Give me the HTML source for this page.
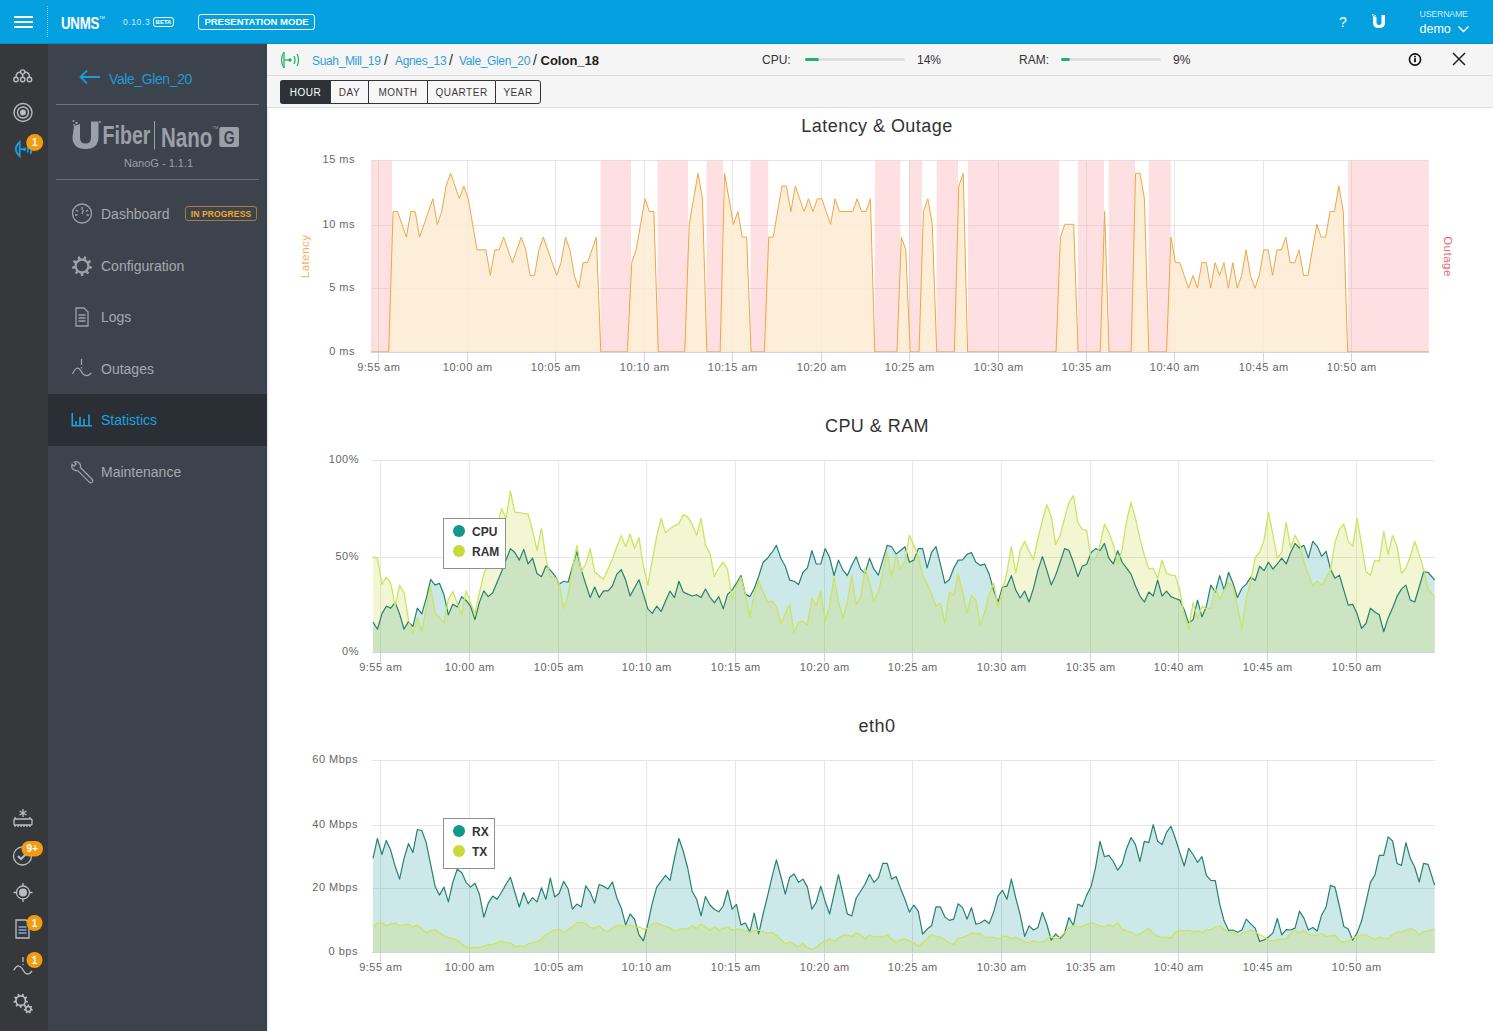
<!DOCTYPE html>
<html>
<head>
<meta charset="utf-8">
<style>
html,body{margin:0;padding:0;}
body{width:1493px;height:1031px;overflow:hidden;position:relative;background:#fff;font-family:"Liberation Sans",sans-serif;}
.abs{position:absolute;}
#top{left:0;top:0;width:1493px;height:44px;background:#04a0e0;box-shadow:inset 0 -1px 0 rgba(0,60,100,0.18);}
#rail{left:0;top:44px;width:48px;height:987px;background:#37383c;}
#side{left:48px;top:44px;width:219px;height:987px;background:#3d434c;box-shadow:1px 0 2px rgba(0,0,0,0.12);}
#hdr1{left:267px;top:44px;width:1226px;height:31px;background:#f5f5f5;border-bottom:1px solid #dcdcdc;}
#hdr2{left:267px;top:76px;width:1226px;height:31px;background:#f5f5f5;border-bottom:1px solid #dcdcdc;}
.charts{position:absolute;left:0;top:0;}
.ax{font-family:"Liberation Sans",sans-serif;font-size:11px;fill:#666;letter-spacing:0.5px;}
.title{font-family:"Liberation Sans",sans-serif;font-size:18px;fill:#333;letter-spacing:0.45px;}
.ttl1{font-family:"Liberation Sans",sans-serif;font-size:11.5px;letter-spacing:0.5px;}
.leg{font-family:"Liberation Sans",sans-serif;font-size:12px;font-weight:bold;fill:#333;}
.t{position:absolute;white-space:nowrap;line-height:1;}
.nav{position:absolute;left:101px;font-size:14px;color:#a4a9b0;line-height:1;}
.navi{position:absolute;left:72px;}
.bc{top:55px;font-size:12px;color:#2f9fd8;letter-spacing:-0.35px;}
.bs{top:53px;font-size:14px;color:#1f1f1f;}
.btn{position:absolute;top:80px;height:24px;box-sizing:border-box;font-size:10px;letter-spacing:0.5px;color:#3a3a3a;line-height:23px;text-align:center;background:#f7f7f7;border-top:1px solid #333;border-bottom:1px solid #333;border-left:1px solid #333;}
</style>
</head>
<body>
<div id="top" class="abs"></div>
<div id="rail" class="abs"></div>
<div id="side" class="abs"></div>
<div id="hdr1" class="abs"></div>
<div id="hdr2" class="abs"></div>

<!-- top bar content -->
<svg class="abs" style="left:0;top:0" width="300" height="44">
  <rect x="14" y="16" width="19" height="2" fill="#fff"/>
  <rect x="14" y="21" width="19" height="2" fill="#fff"/>
  <rect x="14" y="26" width="19" height="2" fill="#fff"/>
  <line x1="47.5" y1="6" x2="47.5" y2="37" stroke="#6fd8fb" stroke-width="1" stroke-dasharray="1,1"/>
</svg>
<div class="t" style="left:60.5px;top:15.5px;font-size:16px;font-weight:bold;color:#fff;transform:scaleX(0.83);transform-origin:0 0;letter-spacing:-0.3px;">UNMS</div>
<div class="t" style="left:99px;top:16px;font-size:4px;color:#fff;">TM</div>
<div class="t" style="left:123px;top:17.5px;font-size:8.5px;color:#cdeefb;letter-spacing:0.6px;">0.10.3</div>
<div class="t" style="left:153px;top:17px;width:19px;height:8px;border:1px solid #fff;border-radius:3px;font-size:6px;font-weight:bold;color:#fff;text-align:center;line-height:8px;">BETA</div>
<div class="t" style="left:198px;top:14px;width:115px;height:14px;border:1px solid #fff;border-radius:3px;font-size:9.5px;font-weight:bold;color:#fff;text-align:center;line-height:14px;">PRESENTATION MODE</div>
<div class="t" style="left:1339px;top:15px;font-size:14px;color:#fff;">?</div>
<svg class="abs" style="left:1370px;top:13px" width="18" height="17" viewBox="0 0 18 17">
  <path d="M3,3 L3,10 Q3,15 9,15 Q15,15 15,10 L15,2 L11.5,2 L11.5,10 Q11.5,12 9,12 Q6.5,12 6.5,10 L6.5,4" fill="#fff"/>
  <rect x="2" y="1" width="1.5" height="1.5" fill="#fff"/><rect x="4.5" y="2" width="1.2" height="1.2" fill="#fff"/>
</svg>
<div class="t" style="left:1419.5px;top:9.5px;font-size:8.8px;color:#c9ecfa;letter-spacing:-0.2px;">USERNAME</div>
<div class="t" style="left:1419.5px;top:23px;font-size:12.5px;color:#fff;">demo</div>
<svg class="abs" style="left:1457px;top:25px" width="14" height="9"><path d="M1.5,1.5 L6.5,6.5 L11.5,1.5" fill="none" stroke="#fff" stroke-width="1.4"/></svg>

<!-- rail icons -->
<svg class="abs" style="left:0;top:44px" width="48" height="987" viewBox="0 44 48 987">
  <g fill="none" stroke="#b9bec5" stroke-width="1.4">
    <circle cx="22.7" cy="72" r="2.1"/><circle cx="16" cy="79.5" r="2.2"/><circle cx="22.7" cy="79.5" r="2.2"/><circle cx="29.5" cy="79.5" r="2.2"/>
    <path d="M16,77.3 Q16,72 20.6,72 M24.8,72 Q29.5,72 29.5,77.3 M22.7,74.1 V77.3"/>
    <circle cx="23" cy="112.5" r="9"/><circle cx="23" cy="112.5" r="5.5"/>
  </g>
  <circle cx="23" cy="112.5" r="3" fill="#b9bec5"/>
  <g fill="none" stroke="#1d9ad7" stroke-width="1.8">
    <path d="M19.7,142 Q12,149 19.7,156.3 Z"/>
    <line x1="19.7" y1="149.2" x2="24.5" y2="149.2"/>
    <path d="M27.5,146.5 Q29,149.5 27.5,152.5"/><path d="M30.5,145 Q32.5,149.5 30.5,154"/>
  </g>
  <circle cx="24.5" cy="149.2" r="1.8" fill="#1d9ad7"/>
  <circle cx="34.7" cy="142.5" r="8.5" fill="#f39c12"/>
  <text x="34.7" y="146.3" text-anchor="middle" font-family="Liberation Sans" font-size="10" font-weight="bold" fill="#fff">1</text>

  <!-- bottom icons -->
  <g fill="none" stroke="#b9bec5" stroke-width="1.3">
    <rect x="14" y="819" width="18" height="6" rx="1"/>
    <path d="M15,825 v2 M18,825 v2 M21,825 v2 M24,825 v2 M27,825 v2 M30,825 v2 M15,817 v2 M30,817 v2"/>
    <path d="M23,809 v8 M19.5,811 l7,4 M26.5,811 l-7,4"/>
    <circle cx="22.5" cy="856" r="9"/>
    <path d="M18,856 l3,3 l6,-6" stroke-width="2" stroke="#9fc4e2"/>
    <circle cx="23" cy="892.5" r="6.5"/>
    <path d="M23,883 v3 M23,899 v3 M13.5,892.5 h3 M29.5,892.5 h3"/>
    <path d="M16,920 h10 l3,3 v15 h-13 z"/>
    <path d="M18.5,927 h8 M18.5,930 h8 M18.5,933 h8" stroke="#7fa9cf"/>
    <path d="M13.8,970.3 Q18,962 22.5,969 Q27,978 32,971"/>
    <path d="M23,957 v5 M23,964 v1"/>
  </g>
  <circle cx="23" cy="892.5" r="4" fill="#b9bec5"/>
  <path d="M26.30,1000.70 L27.89,1001.10 L27.59,1002.78 L25.96,1002.62 L24.99,1004.30 L25.95,1005.63 L24.64,1006.72 L23.50,1005.55 L21.67,1006.21 L21.55,1007.85 L19.85,1007.85 L19.73,1006.21 L17.90,1005.55 L16.76,1006.72 L15.45,1005.63 L16.41,1004.30 L15.44,1002.62 L13.81,1002.78 L13.51,1001.10 L15.10,1000.70 L15.44,998.78 L14.08,997.86 L14.93,996.39 L16.41,997.10 L17.90,995.85 L17.45,994.27 L19.06,993.69 L19.73,995.19 L21.67,995.19 L22.34,993.69 L23.95,994.27 L23.50,995.85 L24.99,997.10 L26.47,996.39 L27.32,997.86 L25.96,998.78 Z M24.60,1000.70 A3.9,3.9 0 1 0 16.80,1000.70 A3.9,3.9 0 1 0 24.60,1000.70 Z" fill="#b9bec5" fill-rule="evenodd"/><path d="M31.80,1009.10 L32.89,1009.43 L32.58,1010.79 L31.45,1010.62 L30.48,1011.84 L30.90,1012.89 L29.64,1013.50 L29.08,1012.51 L27.52,1012.51 L26.96,1013.50 L25.70,1012.89 L26.12,1011.84 L25.15,1010.62 L24.02,1010.79 L23.71,1009.43 L24.80,1009.10 L25.15,1007.58 L24.31,1006.81 L25.18,1005.72 L26.12,1006.36 L27.52,1005.69 L27.60,1004.55 L29.00,1004.55 L29.08,1005.69 L30.48,1006.36 L31.42,1005.72 L32.29,1006.81 L31.45,1007.58 Z M30.10,1009.10 A1.8,1.8 0 1 0 26.50,1009.10 A1.8,1.8 0 1 0 30.10,1009.10 Z" fill="#b9bec5" fill-rule="evenodd"/>
  <rect x="21.5" y="841" width="21.5" height="15.5" rx="7.75" fill="#f39c12"/>
  <text x="32.3" y="852" text-anchor="middle" font-family="Liberation Sans" font-size="10" font-weight="bold" fill="#fff">9+</text>
  <circle cx="34.5" cy="923" r="8" fill="#f39c12"/>
  <text x="34.5" y="927" text-anchor="middle" font-family="Liberation Sans" font-size="10" font-weight="bold" fill="#fff">1</text>
  <circle cx="34.5" cy="960" r="8" fill="#f39c12"/>
  <text x="34.5" y="964" text-anchor="middle" font-family="Liberation Sans" font-size="10" font-weight="bold" fill="#fff">1</text>
</svg>

<!-- sidebar -->
<svg class="abs" style="left:78px;top:68px" width="24" height="18"><path d="M22,9 H3 M9,2.5 L2.5,9 L9,15.5" fill="none" stroke="#1e9ad6" stroke-width="1.8"/></svg>
<div class="t" style="left:109px;top:71.5px;font-size:14px;letter-spacing:-0.4px;color:#1e9ad6;">Vale_Glen_20</div>
<div class="abs" style="left:56px;top:104px;width:203px;height:1px;background:#6d727a;"></div>
<div class="abs" style="left:56px;top:179px;width:203px;height:1px;background:#6d727a;"></div>
<!-- logo -->
<svg class="abs" style="left:0;top:0" width="267" height="170" viewBox="0 0 267 170">
  <g fill="#9aa0a8">
    <path d="M74,126 L80,124 L80,138 Q80,143.5 85.5,143.5 Q91,143.5 91,138 L91,121.5 L98.5,121.5 L98.5,137 Q98.5,149 85.5,149 Q72.5,149 72.5,137 Z"/>
    <circle cx="73.5" cy="121" r="1"/><circle cx="76.5" cy="123" r="1.2"/><circle cx="74" cy="125" r="0.9"/>
    <circle cx="100" cy="122" r="1"/>
    <text x="0" y="0" transform="translate(102.5,144) scale(0.74,1)" font-family="Liberation Sans" font-size="26.5" font-weight="bold">Fiber</text>
    <rect x="154" y="121" width="1" height="28.5"/>
    <text x="0" y="0" transform="translate(161,147) scale(0.72,1)" font-family="Liberation Sans" font-size="28.5" font-weight="bold">Nano</text>
    <text x="212.5" y="129" font-family="Liberation Sans" font-size="4">TM</text>
    <rect x="219.3" y="127" width="19.7" height="20" rx="2.2"/>
  </g>
  <text x="0" y="0" transform="translate(229.2,144) scale(0.78,1)" text-anchor="middle" font-family="Liberation Sans" font-size="18" font-weight="bold" fill="#3d434c">G</text>
</svg>
<div class="t" style="left:124px;top:158px;font-size:11px;color:#9aa0a8;">NanoG - 1.1.1</div>

<div class="abs" style="left:48px;top:394px;width:219px;height:52px;background:#2a2f36;"></div>
<div class="nav" style="top:207px;">Dashboard</div>
<div class="t" style="left:185px;top:206px;width:70px;height:13px;border:1px solid #a57c45;border-radius:3px;font-size:8.5px;font-weight:bold;color:#f5a623;text-align:center;line-height:14px;letter-spacing:0.15px;">IN PROGRESS</div>
<div class="nav" style="top:259px;">Configuration</div>
<div class="nav" style="top:310px;">Logs</div>
<div class="nav" style="top:362px;">Outages</div>
<div class="nav" style="top:413px;color:#21a0dd;">Statistics</div>
<div class="nav" style="top:465px;">Maintenance</div>
<svg class="abs" style="left:68px;top:195px" width="28" height="290" viewBox="68 195 28 290">
  <g fill="none" stroke="#9ca1a8" stroke-width="1.3">
    <circle cx="82" cy="213.5" r="9.5"/>
    <path d="M82,207 v3 M76,210 l2,1.5 M88,210 l-2,1.5 M75,215 h2.5 M89,215 h-2.5 M82,214 l1.5,-4"/>
    <path d="M76,308 h8 l4,4 v14 h-12 z M78.5,315 h7 M78.5,318 h7 M78.5,321 h7"/>
    <path d="M72.5,374 Q77,364 81,371 Q85,379 91.5,373"/>
    <path d="M81.5,359 v6 M81.5,367 v1.5"/>
    <path transform="translate(76.2,466.2) rotate(45)" d="M3.9,2 A4.5,4.5 0 0 1 -4.24,1.5 L-1.5,1.5 L-1.5,-1.5 L-4.24,-1.5 A4.5,4.5 0 0 1 3.9,-2 L20.5,-2 A2,2 0 0 1 20.5,2 Z"/>
  </g>
  <path d="M89.60,266.00 L91.98,266.56 L91.57,268.89 L89.14,268.60 L87.82,270.89 L89.29,272.85 L87.48,274.37 L85.80,272.58 L83.32,273.48 L83.18,275.93 L80.82,275.93 L80.68,273.48 L78.20,272.58 L76.52,274.37 L74.71,272.85 L76.18,270.89 L74.86,268.60 L72.43,268.89 L72.02,266.56 L74.40,266.00 L74.86,263.40 L72.81,262.06 L73.99,260.01 L76.18,261.11 L78.20,259.42 L77.49,257.07 L79.72,256.26 L80.68,258.52 L83.32,258.52 L84.28,256.26 L86.51,257.07 L85.80,259.42 L87.82,261.11 L90.01,260.01 L91.19,262.06 L89.14,263.40 Z M87.30,266.00 A5.3,5.3 0 1 0 76.70,266.00 A5.3,5.3 0 1 0 87.30,266.00 Z" fill="#9ca1a8" fill-rule="evenodd"/>
  <g fill="none" stroke="#21a0dd" stroke-width="1.6">
    <path d="M71.5,425.8 h20.5 M72.3,413 v12.8 M76,421 v4.8 M80,416.7 v9.1 M84,419 v6.8 M89,414.6 v11.2"/>
  </g>
</svg>

<!-- header content -->
<svg class="abs" style="left:278px;top:50px" width="24" height="20" viewBox="0 0 24 20">
  <g fill="none" stroke="#2eb36b" stroke-width="1.3">
    <path d="M6,2 Q1,10 6,18"/><line x1="6" y1="2" x2="6" y2="18"/>
    <line x1="6" y1="10" x2="12" y2="10"/>
    <path d="M16,6 Q18,10 16,14"/><path d="M19,4 Q22,10 19,16"/>
  </g>
  <circle cx="12" cy="10" r="1.8" fill="#2eb36b"/>
</svg>
<div class="t bc" style="left:312px;">Suah_Mill_19</div>
<div class="t bs" style="left:384px;">/</div>
<div class="t bc" style="left:395px;">Agnes_13</div>
<div class="t bs" style="left:449px;">/</div>
<div class="t bc" style="left:459px;">Vale_Glen_20</div>
<div class="t bs" style="left:533px;">/</div>
<div class="t" style="left:540.5px;top:54px;font-size:13px;font-weight:bold;color:#1f1f1f;">Colon_18</div>
<div class="t" style="left:762px;top:54px;font-size:12px;color:#333;">CPU:</div>
<div class="abs" style="left:805px;top:58px;width:100px;height:3px;background:#e0e0e0;border-radius:2px;"></div>
<div class="abs" style="left:805px;top:58px;width:14px;height:3px;background:#1fb36a;border-radius:2px;"></div>
<div class="t" style="left:917px;top:54px;font-size:12px;color:#333;">14%</div>
<div class="t" style="left:1019px;top:54px;font-size:12px;color:#333;">RAM:</div>
<div class="abs" style="left:1061px;top:58px;width:100px;height:3px;background:#e0e0e0;border-radius:2px;"></div>
<div class="abs" style="left:1061px;top:58px;width:9px;height:3px;background:#1fb36a;border-radius:2px;"></div>
<div class="t" style="left:1173px;top:54px;font-size:12px;color:#333;">9%</div>
<svg class="abs" style="left:1406px;top:51px" width="18" height="18" viewBox="0 0 18 18">
  <circle cx="9" cy="8.5" r="5.6" fill="none" stroke="#111" stroke-width="1.6"/>
  <rect x="8.1" y="7.2" width="1.8" height="4" fill="#111"/><rect x="8.1" y="4.8" width="1.8" height="1.6" fill="#111"/>
</svg>
<svg class="abs" style="left:1450px;top:51px" width="18" height="16"><path d="M3,2 L15,14 M15,2 L3,14" stroke="#222" stroke-width="1.5"/></svg>

<div class="btn" style="left:280px;width:50px;background:#2e3237;color:#fff;border-radius:3px 0 0 3px;border-color:#2e3237;">HOUR</div>
<div class="btn" style="left:330px;width:38px;">DAY</div>
<div class="btn" style="left:368px;width:59px;">MONTH</div>
<div class="btn" style="left:427px;width:68px;">QUARTER</div>
<div class="btn" style="left:495px;width:46px;border-right:1px solid #333;border-radius:0 3px 3px 0;">YEAR</div>

<svg class="charts" width="1493" height="1031" viewBox="0 0 1493 1031"><line x1="371" y1="160.5" x2="1429" y2="160.5" stroke="#e6e6e6"/><line x1="371" y1="225.5" x2="1429" y2="225.5" stroke="#e6e6e6"/><line x1="371" y1="288.5" x2="1429" y2="288.5" stroke="#e6e6e6"/><line x1="371" y1="351.5" x2="1429" y2="351.5" stroke="#e6e6e6"/><line x1="378.5" y1="160" x2="378.5" y2="352" stroke="#e6e6e6"/><line x1="467.5" y1="160" x2="467.5" y2="352" stroke="#e6e6e6"/><line x1="555.5" y1="160" x2="555.5" y2="352" stroke="#e6e6e6"/><line x1="644.5" y1="160" x2="644.5" y2="352" stroke="#e6e6e6"/><line x1="732.5" y1="160" x2="732.5" y2="352" stroke="#e6e6e6"/><line x1="821.5" y1="160" x2="821.5" y2="352" stroke="#e6e6e6"/><line x1="909.5" y1="160" x2="909.5" y2="352" stroke="#e6e6e6"/><line x1="998.5" y1="160" x2="998.5" y2="352" stroke="#e6e6e6"/><line x1="1086.5" y1="160" x2="1086.5" y2="352" stroke="#e6e6e6"/><line x1="1174.5" y1="160" x2="1174.5" y2="352" stroke="#e6e6e6"/><line x1="1263.5" y1="160" x2="1263.5" y2="352" stroke="#e6e6e6"/><line x1="1351.5" y1="160" x2="1351.5" y2="352" stroke="#e6e6e6"/><rect x="371.0" y="160.5" width="21.0" height="191.5" fill="#fca9b1" fill-opacity="0.36"/><rect x="600.5" y="160.5" width="30.5" height="191.5" fill="#fca9b1" fill-opacity="0.36"/><rect x="657.5" y="160.5" width="30.5" height="191.5" fill="#fca9b1" fill-opacity="0.36"/><rect x="706.6" y="160.5" width="16.4" height="191.5" fill="#fca9b1" fill-opacity="0.36"/><rect x="750.5" y="160.5" width="17.7" height="191.5" fill="#fca9b1" fill-opacity="0.36"/><rect x="874.8" y="160.5" width="25.4" height="191.5" fill="#fca9b1" fill-opacity="0.36"/><rect x="909.1" y="160.5" width="12.8" height="191.5" fill="#fca9b1" fill-opacity="0.36"/><rect x="936.6" y="160.5" width="21.4" height="191.5" fill="#fca9b1" fill-opacity="0.36"/><rect x="968.0" y="160.5" width="91.2" height="191.5" fill="#fca9b1" fill-opacity="0.36"/><rect x="1078.0" y="160.5" width="26.0" height="191.5" fill="#fca9b1" fill-opacity="0.36"/><rect x="1108.7" y="160.5" width="26.3" height="191.5" fill="#fca9b1" fill-opacity="0.36"/><rect x="1148.6" y="160.5" width="22.1" height="191.5" fill="#fca9b1" fill-opacity="0.36"/><rect x="1348.0" y="160.5" width="80.9" height="191.5" fill="#fca9b1" fill-opacity="0.36"/><path d="M371.00,352.00 L375.42,352.00 L379.84,352.00 L384.26,352.00 L388.68,352.00 L393.10,211.57 L397.52,211.57 L401.94,224.33 L406.36,237.10 L410.78,211.57 L415.19,211.57 L419.61,237.10 L424.03,224.33 L428.45,211.57 L432.87,198.80 L437.29,224.33 L441.71,211.57 L446.13,186.03 L450.55,173.27 L454.97,186.03 L459.39,198.80 L463.81,186.03 L468.23,198.80 L472.65,224.33 L477.07,249.87 L481.49,249.87 L485.91,249.87 L490.33,275.40 L494.75,249.87 L499.17,249.87 L503.59,237.10 L508.00,249.87 L512.42,262.63 L516.84,249.87 L521.26,237.10 L525.68,249.87 L530.10,275.40 L534.52,275.40 L538.94,249.87 L543.36,237.10 L547.78,249.87 L552.20,262.63 L556.62,275.40 L561.04,262.63 L565.46,237.10 L569.88,249.87 L574.30,275.40 L578.72,288.17 L583.14,262.63 L587.56,262.63 L591.98,249.87 L596.39,237.10 L600.81,352.00 L605.23,352.00 L609.65,352.00 L614.07,352.00 L618.49,352.00 L622.91,352.00 L627.33,352.00 L631.75,262.63 L636.17,249.87 L640.59,224.33 L645.01,198.80 L649.43,211.57 L653.85,211.57 L658.27,352.00 L662.69,352.00 L667.11,352.00 L671.53,352.00 L675.95,352.00 L680.37,352.00 L684.78,352.00 L689.20,224.33 L693.62,198.80 L698.04,173.27 L702.46,198.80 L706.88,352.00 L711.30,352.00 L715.72,352.00 L720.14,352.00 L724.56,173.27 L728.98,198.80 L733.40,224.33 L737.82,211.57 L742.24,237.10 L746.66,237.10 L751.08,352.00 L755.50,352.00 L759.92,352.00 L764.34,352.00 L768.75,237.10 L773.17,237.10 L777.59,211.57 L782.01,186.03 L786.43,186.03 L790.85,211.57 L795.27,186.03 L799.69,198.80 L804.11,211.57 L808.53,198.80 L812.95,211.57 L817.37,198.80 L821.79,198.80 L826.21,211.57 L830.63,224.33 L835.05,198.80 L839.47,211.57 L843.89,211.57 L848.31,211.57 L852.73,211.57 L857.14,198.80 L861.56,211.57 L865.98,211.57 L870.40,198.80 L874.82,352.00 L879.24,352.00 L883.66,352.00 L888.08,352.00 L892.50,352.00 L896.92,352.00 L901.34,237.10 L905.76,249.87 L910.18,352.00 L914.60,352.00 L919.02,352.00 L923.44,211.57 L927.86,198.80 L932.28,224.33 L936.70,352.00 L941.12,352.00 L945.54,352.00 L949.95,352.00 L954.37,352.00 L958.79,186.03 L963.21,173.27 L967.63,352.00 L972.05,352.00 L976.47,352.00 L980.89,352.00 L985.31,352.00 L989.73,352.00 L994.15,352.00 L998.57,352.00 L1002.99,352.00 L1007.41,352.00 L1011.83,352.00 L1016.25,352.00 L1020.67,352.00 L1025.09,352.00 L1029.51,352.00 L1033.93,352.00 L1038.34,352.00 L1042.76,352.00 L1047.18,352.00 L1051.60,352.00 L1056.02,352.00 L1060.44,237.10 L1064.86,224.33 L1069.28,224.33 L1073.70,224.33 L1078.12,352.00 L1082.54,352.00 L1086.96,352.00 L1091.38,352.00 L1095.80,352.00 L1100.22,352.00 L1104.64,211.57 L1109.06,352.00 L1113.48,352.00 L1117.90,352.00 L1122.32,352.00 L1126.73,352.00 L1131.15,352.00 L1135.57,173.27 L1139.99,173.27 L1144.41,198.80 L1148.83,352.00 L1153.25,352.00 L1157.67,352.00 L1162.09,352.00 L1166.51,352.00 L1170.93,237.10 L1175.35,262.63 L1179.77,262.63 L1184.19,275.40 L1188.61,288.17 L1193.03,275.40 L1197.45,288.17 L1201.87,262.63 L1206.29,262.63 L1210.70,288.17 L1215.12,262.63 L1219.54,275.40 L1223.96,262.63 L1228.38,288.17 L1232.80,262.63 L1237.22,288.17 L1241.64,275.40 L1246.06,249.87 L1250.48,275.40 L1254.90,288.17 L1259.32,275.40 L1263.74,249.87 L1268.16,249.87 L1272.58,275.40 L1277.00,249.87 L1281.42,249.87 L1285.84,237.10 L1290.26,262.63 L1294.68,262.63 L1299.10,249.87 L1303.51,275.40 L1307.93,275.40 L1312.35,249.87 L1316.77,224.33 L1321.19,237.10 L1325.61,237.10 L1330.03,211.57 L1334.45,211.57 L1338.87,186.03 L1343.29,211.57 L1347.71,352.00 L1352.13,352.00 L1356.55,352.00 L1360.97,352.00 L1365.39,352.00 L1369.81,352.00 L1374.23,352.00 L1378.65,352.00 L1383.07,352.00 L1387.49,352.00 L1391.90,352.00 L1396.32,352.00 L1400.74,352.00 L1405.16,352.00 L1409.58,352.00 L1414.00,352.00 L1418.42,352.00 L1422.84,352.00 L1428.90,352.00 L1428.90,352.00 L371.00,352.00 Z" fill="#fdebd2" fill-opacity="0.85"/><path d="M371.00,352.00 L375.42,352.00 L379.84,352.00 L384.26,352.00 L388.68,352.00 L393.10,211.57 L397.52,211.57 L401.94,224.33 L406.36,237.10 L410.78,211.57 L415.19,211.57 L419.61,237.10 L424.03,224.33 L428.45,211.57 L432.87,198.80 L437.29,224.33 L441.71,211.57 L446.13,186.03 L450.55,173.27 L454.97,186.03 L459.39,198.80 L463.81,186.03 L468.23,198.80 L472.65,224.33 L477.07,249.87 L481.49,249.87 L485.91,249.87 L490.33,275.40 L494.75,249.87 L499.17,249.87 L503.59,237.10 L508.00,249.87 L512.42,262.63 L516.84,249.87 L521.26,237.10 L525.68,249.87 L530.10,275.40 L534.52,275.40 L538.94,249.87 L543.36,237.10 L547.78,249.87 L552.20,262.63 L556.62,275.40 L561.04,262.63 L565.46,237.10 L569.88,249.87 L574.30,275.40 L578.72,288.17 L583.14,262.63 L587.56,262.63 L591.98,249.87 L596.39,237.10 L600.81,352.00 L605.23,352.00 L609.65,352.00 L614.07,352.00 L618.49,352.00 L622.91,352.00 L627.33,352.00 L631.75,262.63 L636.17,249.87 L640.59,224.33 L645.01,198.80 L649.43,211.57 L653.85,211.57 L658.27,352.00 L662.69,352.00 L667.11,352.00 L671.53,352.00 L675.95,352.00 L680.37,352.00 L684.78,352.00 L689.20,224.33 L693.62,198.80 L698.04,173.27 L702.46,198.80 L706.88,352.00 L711.30,352.00 L715.72,352.00 L720.14,352.00 L724.56,173.27 L728.98,198.80 L733.40,224.33 L737.82,211.57 L742.24,237.10 L746.66,237.10 L751.08,352.00 L755.50,352.00 L759.92,352.00 L764.34,352.00 L768.75,237.10 L773.17,237.10 L777.59,211.57 L782.01,186.03 L786.43,186.03 L790.85,211.57 L795.27,186.03 L799.69,198.80 L804.11,211.57 L808.53,198.80 L812.95,211.57 L817.37,198.80 L821.79,198.80 L826.21,211.57 L830.63,224.33 L835.05,198.80 L839.47,211.57 L843.89,211.57 L848.31,211.57 L852.73,211.57 L857.14,198.80 L861.56,211.57 L865.98,211.57 L870.40,198.80 L874.82,352.00 L879.24,352.00 L883.66,352.00 L888.08,352.00 L892.50,352.00 L896.92,352.00 L901.34,237.10 L905.76,249.87 L910.18,352.00 L914.60,352.00 L919.02,352.00 L923.44,211.57 L927.86,198.80 L932.28,224.33 L936.70,352.00 L941.12,352.00 L945.54,352.00 L949.95,352.00 L954.37,352.00 L958.79,186.03 L963.21,173.27 L967.63,352.00 L972.05,352.00 L976.47,352.00 L980.89,352.00 L985.31,352.00 L989.73,352.00 L994.15,352.00 L998.57,352.00 L1002.99,352.00 L1007.41,352.00 L1011.83,352.00 L1016.25,352.00 L1020.67,352.00 L1025.09,352.00 L1029.51,352.00 L1033.93,352.00 L1038.34,352.00 L1042.76,352.00 L1047.18,352.00 L1051.60,352.00 L1056.02,352.00 L1060.44,237.10 L1064.86,224.33 L1069.28,224.33 L1073.70,224.33 L1078.12,352.00 L1082.54,352.00 L1086.96,352.00 L1091.38,352.00 L1095.80,352.00 L1100.22,352.00 L1104.64,211.57 L1109.06,352.00 L1113.48,352.00 L1117.90,352.00 L1122.32,352.00 L1126.73,352.00 L1131.15,352.00 L1135.57,173.27 L1139.99,173.27 L1144.41,198.80 L1148.83,352.00 L1153.25,352.00 L1157.67,352.00 L1162.09,352.00 L1166.51,352.00 L1170.93,237.10 L1175.35,262.63 L1179.77,262.63 L1184.19,275.40 L1188.61,288.17 L1193.03,275.40 L1197.45,288.17 L1201.87,262.63 L1206.29,262.63 L1210.70,288.17 L1215.12,262.63 L1219.54,275.40 L1223.96,262.63 L1228.38,288.17 L1232.80,262.63 L1237.22,288.17 L1241.64,275.40 L1246.06,249.87 L1250.48,275.40 L1254.90,288.17 L1259.32,275.40 L1263.74,249.87 L1268.16,249.87 L1272.58,275.40 L1277.00,249.87 L1281.42,249.87 L1285.84,237.10 L1290.26,262.63 L1294.68,262.63 L1299.10,249.87 L1303.51,275.40 L1307.93,275.40 L1312.35,249.87 L1316.77,224.33 L1321.19,237.10 L1325.61,237.10 L1330.03,211.57 L1334.45,211.57 L1338.87,186.03 L1343.29,211.57 L1347.71,352.00 L1352.13,352.00 L1356.55,352.00 L1360.97,352.00 L1365.39,352.00 L1369.81,352.00 L1374.23,352.00 L1378.65,352.00 L1383.07,352.00 L1387.49,352.00 L1391.90,352.00 L1396.32,352.00 L1400.74,352.00 L1405.16,352.00 L1409.58,352.00 L1414.00,352.00 L1418.42,352.00 L1422.84,352.00 L1428.90,352.00" fill="none" stroke="#eda746" stroke-width="1" stroke-linejoin="round"/><line x1="371" y1="352.5" x2="1429" y2="352.5" stroke="#ccd6eb"/><line x1="378.5" y1="352" x2="378.5" y2="362" stroke="#ccd6eb"/><text x="378.75" y="371" text-anchor="middle" class="ax">9:55 am</text><line x1="467.5" y1="352" x2="467.5" y2="362" stroke="#ccd6eb"/><text x="467.75" y="371" text-anchor="middle" class="ax">10:00 am</text><line x1="555.5" y1="352" x2="555.5" y2="362" stroke="#ccd6eb"/><text x="555.75" y="371" text-anchor="middle" class="ax">10:05 am</text><line x1="644.5" y1="352" x2="644.5" y2="362" stroke="#ccd6eb"/><text x="644.75" y="371" text-anchor="middle" class="ax">10:10 am</text><line x1="732.5" y1="352" x2="732.5" y2="362" stroke="#ccd6eb"/><text x="732.75" y="371" text-anchor="middle" class="ax">10:15 am</text><line x1="821.5" y1="352" x2="821.5" y2="362" stroke="#ccd6eb"/><text x="821.75" y="371" text-anchor="middle" class="ax">10:20 am</text><line x1="909.5" y1="352" x2="909.5" y2="362" stroke="#ccd6eb"/><text x="909.75" y="371" text-anchor="middle" class="ax">10:25 am</text><line x1="998.5" y1="352" x2="998.5" y2="362" stroke="#ccd6eb"/><text x="998.75" y="371" text-anchor="middle" class="ax">10:30 am</text><line x1="1086.5" y1="352" x2="1086.5" y2="362" stroke="#ccd6eb"/><text x="1086.75" y="371" text-anchor="middle" class="ax">10:35 am</text><line x1="1174.5" y1="352" x2="1174.5" y2="362" stroke="#ccd6eb"/><text x="1174.75" y="371" text-anchor="middle" class="ax">10:40 am</text><line x1="1263.5" y1="352" x2="1263.5" y2="362" stroke="#ccd6eb"/><text x="1263.75" y="371" text-anchor="middle" class="ax">10:45 am</text><line x1="1351.5" y1="352" x2="1351.5" y2="362" stroke="#ccd6eb"/><text x="1351.75" y="371" text-anchor="middle" class="ax">10:50 am</text><text x="355" y="163" text-anchor="end" class="ax">15 ms</text><text x="355" y="228" text-anchor="end" class="ax">10 ms</text><text x="355" y="291" text-anchor="end" class="ax">5 ms</text><text x="355" y="355" text-anchor="end" class="ax">0 ms</text><text x="0" y="0" transform="translate(308.8,256.3) rotate(-90)" text-anchor="middle" class="ttl1" fill="#f2b15e">Latency</text><text x="0" y="0" transform="translate(1444,256.5) rotate(90)" text-anchor="middle" class="ttl1" fill="#e8677d">Outage</text><text x="877" y="132" text-anchor="middle" class="title">Latency &amp; Outage</text><line x1="372" y1="460.5" x2="1435" y2="460.5" stroke="#e6e6e6"/><line x1="372" y1="557.5" x2="1435" y2="557.5" stroke="#e6e6e6"/><line x1="372" y1="652.5" x2="1435" y2="652.5" stroke="#e6e6e6"/><line x1="380.5" y1="460" x2="380.5" y2="652" stroke="#e6e6e6"/><line x1="469.5" y1="460" x2="469.5" y2="652" stroke="#e6e6e6"/><line x1="558.5" y1="460" x2="558.5" y2="652" stroke="#e6e6e6"/><line x1="646.5" y1="460" x2="646.5" y2="652" stroke="#e6e6e6"/><line x1="735.5" y1="460" x2="735.5" y2="652" stroke="#e6e6e6"/><line x1="824.5" y1="460" x2="824.5" y2="652" stroke="#e6e6e6"/><line x1="912.5" y1="460" x2="912.5" y2="652" stroke="#e6e6e6"/><line x1="1001.5" y1="460" x2="1001.5" y2="652" stroke="#e6e6e6"/><line x1="1090.5" y1="460" x2="1090.5" y2="652" stroke="#e6e6e6"/><line x1="1178.5" y1="460" x2="1178.5" y2="652" stroke="#e6e6e6"/><line x1="1267.5" y1="460" x2="1267.5" y2="652" stroke="#e6e6e6"/><line x1="1356.5" y1="460" x2="1356.5" y2="652" stroke="#e6e6e6"/><path d="M373.00,621.96 L377.43,629.26 L381.87,613.90 L386.30,606.22 L390.73,608.14 L395.17,602.38 L399.60,613.90 L404.03,629.26 L408.46,621.58 L412.90,626.38 L417.33,608.14 L421.76,613.90 L426.20,598.54 L430.63,579.34 L435.06,585.10 L439.50,583.18 L443.93,594.70 L448.36,614.86 L452.79,604.30 L457.23,606.99 L461.66,596.62 L466.09,600.46 L470.53,606.22 L474.96,619.66 L479.39,602.38 L483.82,590.86 L488.26,596.62 L492.69,592.78 L497.12,582.22 L501.56,571.66 L505.99,560.14 L510.42,548.62 L514.86,552.46 L519.29,560.14 L523.72,549.39 L528.15,563.98 L532.59,558.22 L537.02,573.58 L541.45,576.65 L545.89,565.90 L550.32,570.12 L554.75,575.50 L559.19,584.14 L563.62,581.26 L568.05,582.22 L572.49,566.28 L576.92,551.31 L581.35,570.12 L585.78,584.14 L590.22,597.58 L594.65,587.02 L599.08,597.58 L603.52,590.86 L607.95,590.86 L612.38,586.06 L616.82,574.16 L621.25,569.74 L625.68,580.11 L630.11,596.04 L634.55,587.79 L638.98,579.72 L643.41,594.12 L647.85,608.91 L652.28,613.32 L656.71,606.22 L661.14,611.40 L665.58,601.04 L670.01,591.05 L674.44,597.58 L678.88,581.26 L683.31,592.01 L687.74,594.12 L692.18,596.04 L696.61,594.70 L701.04,597.58 L705.47,588.94 L709.91,597.00 L714.34,602.96 L718.77,596.62 L723.21,608.91 L727.64,594.12 L732.07,590.09 L736.51,583.18 L740.94,575.50 L745.37,594.12 L749.81,596.62 L754.24,588.56 L758.67,576.27 L763.10,562.25 L767.54,558.22 L771.97,552.46 L776.40,545.36 L780.84,558.22 L785.27,566.28 L789.70,580.11 L794.13,581.26 L798.57,584.52 L803.00,572.24 L807.43,567.82 L811.87,550.73 L816.30,563.98 L820.73,563.98 L825.17,548.62 L829.60,557.26 L834.03,575.50 L838.46,560.14 L842.90,570.12 L847.33,575.50 L851.76,565.32 L856.20,556.68 L860.63,569.16 L865.06,573.20 L869.50,558.22 L873.93,569.16 L878.36,575.12 L882.79,560.14 L887.23,545.36 L891.66,546.70 L896.09,554.00 L900.53,550.54 L904.96,546.70 L909.39,562.25 L913.83,560.14 L918.26,548.62 L922.69,548.62 L927.12,567.82 L931.56,552.46 L935.99,546.70 L940.42,564.17 L944.86,583.18 L949.29,579.72 L953.72,568.20 L958.16,560.14 L962.59,559.95 L967.02,554.38 L971.45,552.46 L975.89,562.25 L980.32,565.32 L984.75,564.17 L989.19,574.16 L993.62,590.09 L998.05,602.00 L1002.49,587.02 L1006.92,586.06 L1011.35,575.69 L1015.78,590.09 L1020.22,597.96 L1024.65,591.05 L1029.08,602.00 L1033.52,588.17 L1037.95,570.12 L1042.38,556.68 L1046.82,570.12 L1051.25,585.10 L1055.68,575.12 L1060.12,562.25 L1064.55,548.62 L1068.98,550.54 L1073.41,562.25 L1077.85,576.65 L1082.28,566.28 L1086.71,564.17 L1091.15,552.46 L1095.58,548.62 L1100.01,550.54 L1104.44,543.44 L1108.88,558.22 L1113.31,563.98 L1117.74,550.73 L1122.18,562.25 L1126.61,568.20 L1131.04,574.16 L1135.48,586.06 L1139.91,596.04 L1144.34,602.00 L1148.78,592.01 L1153.21,596.04 L1157.64,580.11 L1162.07,596.04 L1166.51,591.05 L1170.94,596.62 L1175.37,598.54 L1179.81,600.08 L1184.24,610.06 L1188.67,622.92 L1193.11,619.85 L1197.54,600.08 L1201.97,616.97 L1206.40,606.22 L1210.84,585.10 L1215.27,592.01 L1219.70,575.69 L1224.14,590.09 L1228.57,572.24 L1233.00,583.18 L1237.43,597.58 L1241.87,588.17 L1246.30,584.14 L1250.73,577.23 L1255.17,580.49 L1259.60,566.28 L1264.03,570.70 L1268.47,562.25 L1272.90,569.16 L1277.33,563.98 L1281.76,558.22 L1286.20,563.98 L1290.63,552.46 L1295.06,543.44 L1299.50,548.04 L1303.93,545.36 L1308.36,557.84 L1312.80,541.32 L1317.23,546.32 L1321.66,556.30 L1326.09,551.31 L1330.53,569.16 L1334.96,578.19 L1339.39,575.12 L1343.83,590.09 L1348.26,605.07 L1352.69,604.30 L1357.13,613.90 L1361.56,628.30 L1365.99,623.50 L1370.42,608.33 L1374.86,611.98 L1379.29,614.86 L1383.72,631.76 L1388.16,617.93 L1392.59,607.95 L1397.02,596.43 L1401.46,589.13 L1405.89,585.10 L1410.32,600.08 L1414.75,602.00 L1419.19,587.02 L1423.62,571.85 L1428.05,572.24 L1434.70,580.11 L1434.70,652.30 L373.00,652.30 Z" fill="#1c9898" fill-opacity="0.22"/><path d="M373.00,556.88 L377.43,558.22 L381.87,584.14 L386.30,577.42 L390.73,583.18 L395.17,606.22 L399.60,585.10 L404.03,592.78 L408.46,619.66 L412.90,633.10 L417.33,617.74 L421.76,631.76 L426.20,608.14 L430.63,586.06 L435.06,612.94 L439.50,617.74 L443.93,622.92 L448.36,599.12 L452.79,591.63 L457.23,602.96 L461.66,614.86 L466.09,590.86 L470.53,602.38 L474.96,613.90 L479.39,592.78 L483.82,574.16 L488.26,562.06 L492.69,540.94 L497.12,527.50 L501.56,508.30 L505.99,518.48 L510.42,491.21 L514.86,512.14 L519.29,512.52 L523.72,513.48 L528.15,514.06 L532.59,530.38 L537.02,550.54 L541.45,528.08 L545.89,558.22 L550.32,576.65 L554.75,577.42 L559.19,583.18 L563.62,608.33 L568.05,595.08 L572.49,568.20 L576.92,545.36 L581.35,571.66 L585.78,564.17 L590.22,548.62 L594.65,571.66 L599.08,575.50 L603.52,579.34 L607.95,569.16 L612.38,559.37 L616.82,546.70 L621.25,535.37 L625.68,546.70 L630.11,534.03 L634.55,548.62 L638.98,537.48 L643.41,566.28 L647.85,585.10 L652.28,560.14 L656.71,536.33 L661.14,518.48 L665.58,532.88 L670.01,528.84 L674.44,525.58 L678.88,523.66 L683.31,514.64 L687.74,516.94 L692.18,524.43 L696.61,535.37 L701.04,518.48 L705.47,545.36 L709.91,553.23 L714.34,576.27 L718.77,567.82 L723.21,562.25 L727.64,569.74 L732.07,599.12 L736.51,586.06 L740.94,577.42 L745.37,594.12 L749.81,616.97 L754.24,594.12 L758.67,580.49 L763.10,592.01 L767.54,602.00 L771.97,601.04 L776.40,606.22 L780.84,623.88 L785.27,613.52 L789.70,604.30 L794.13,632.91 L798.57,621.96 L803.00,621.58 L807.43,624.84 L811.87,597.96 L816.30,606.22 L820.73,591.05 L825.17,620.81 L829.60,606.22 L834.03,577.42 L838.46,602.00 L842.90,617.74 L847.33,602.00 L851.76,575.50 L856.20,604.30 L860.63,597.96 L865.06,568.20 L869.50,582.22 L873.93,601.04 L878.36,592.01 L882.79,572.24 L887.23,552.46 L891.66,576.27 L896.09,555.34 L900.53,569.16 L904.96,561.29 L909.39,535.37 L913.83,545.36 L918.26,556.30 L922.69,575.12 L927.12,584.14 L931.56,594.12 L935.99,606.22 L940.42,602.96 L944.86,623.50 L949.29,592.01 L953.72,595.08 L958.16,574.16 L962.59,592.01 L967.02,612.94 L971.45,595.08 L975.89,600.08 L980.32,624.84 L984.75,611.98 L989.19,594.12 L993.62,583.18 L998.05,606.99 L1002.49,590.09 L1006.92,572.24 L1011.35,546.70 L1015.78,573.20 L1020.22,550.54 L1024.65,541.32 L1029.08,551.31 L1033.52,559.37 L1037.95,538.44 L1042.38,520.59 L1046.82,504.65 L1051.25,516.56 L1055.68,544.40 L1060.12,535.37 L1064.55,518.48 L1068.98,502.54 L1073.41,495.63 L1077.85,522.51 L1082.28,529.42 L1086.71,530.38 L1091.15,560.14 L1095.58,559.37 L1100.01,544.40 L1104.44,524.04 L1108.88,532.49 L1113.31,544.40 L1117.74,564.17 L1122.18,549.39 L1126.61,520.59 L1131.04,502.54 L1135.48,518.48 L1139.91,538.44 L1144.34,555.34 L1148.78,569.16 L1153.21,568.20 L1157.64,578.19 L1162.07,560.14 L1166.51,573.20 L1170.94,575.12 L1175.37,575.69 L1179.81,590.09 L1184.24,616.01 L1188.67,628.88 L1193.11,602.38 L1197.54,618.89 L1201.97,606.22 L1206.40,608.91 L1210.84,608.14 L1215.27,588.56 L1219.70,599.12 L1224.14,590.09 L1228.57,582.22 L1233.00,587.02 L1237.43,606.22 L1241.87,628.88 L1246.30,597.96 L1250.73,582.22 L1255.17,557.26 L1259.60,552.46 L1264.03,540.36 L1268.47,512.52 L1272.90,534.41 L1277.33,558.22 L1281.76,552.46 L1286.20,522.51 L1290.63,547.28 L1295.06,535.37 L1299.50,543.44 L1303.93,562.25 L1308.36,574.16 L1312.80,586.06 L1317.23,581.26 L1321.66,585.10 L1326.09,578.19 L1330.53,570.12 L1334.96,542.48 L1339.39,529.42 L1343.83,524.04 L1348.26,541.32 L1352.69,546.32 L1357.13,518.48 L1361.56,544.40 L1365.99,571.85 L1370.42,575.12 L1374.86,560.14 L1379.29,561.29 L1383.72,531.34 L1388.16,554.38 L1392.59,535.37 L1397.02,546.32 L1401.46,573.20 L1405.89,568.20 L1410.32,556.30 L1414.75,541.32 L1419.19,554.38 L1423.62,569.16 L1428.05,589.13 L1434.70,597.00 L1434.70,652.30 L373.00,652.30 Z" fill="#c8d637" fill-opacity="0.22"/><path d="M373.00,621.96 L377.43,629.26 L381.87,613.90 L386.30,606.22 L390.73,608.14 L395.17,602.38 L399.60,613.90 L404.03,629.26 L408.46,621.58 L412.90,626.38 L417.33,608.14 L421.76,613.90 L426.20,598.54 L430.63,579.34 L435.06,585.10 L439.50,583.18 L443.93,594.70 L448.36,614.86 L452.79,604.30 L457.23,606.99 L461.66,596.62 L466.09,600.46 L470.53,606.22 L474.96,619.66 L479.39,602.38 L483.82,590.86 L488.26,596.62 L492.69,592.78 L497.12,582.22 L501.56,571.66 L505.99,560.14 L510.42,548.62 L514.86,552.46 L519.29,560.14 L523.72,549.39 L528.15,563.98 L532.59,558.22 L537.02,573.58 L541.45,576.65 L545.89,565.90 L550.32,570.12 L554.75,575.50 L559.19,584.14 L563.62,581.26 L568.05,582.22 L572.49,566.28 L576.92,551.31 L581.35,570.12 L585.78,584.14 L590.22,597.58 L594.65,587.02 L599.08,597.58 L603.52,590.86 L607.95,590.86 L612.38,586.06 L616.82,574.16 L621.25,569.74 L625.68,580.11 L630.11,596.04 L634.55,587.79 L638.98,579.72 L643.41,594.12 L647.85,608.91 L652.28,613.32 L656.71,606.22 L661.14,611.40 L665.58,601.04 L670.01,591.05 L674.44,597.58 L678.88,581.26 L683.31,592.01 L687.74,594.12 L692.18,596.04 L696.61,594.70 L701.04,597.58 L705.47,588.94 L709.91,597.00 L714.34,602.96 L718.77,596.62 L723.21,608.91 L727.64,594.12 L732.07,590.09 L736.51,583.18 L740.94,575.50 L745.37,594.12 L749.81,596.62 L754.24,588.56 L758.67,576.27 L763.10,562.25 L767.54,558.22 L771.97,552.46 L776.40,545.36 L780.84,558.22 L785.27,566.28 L789.70,580.11 L794.13,581.26 L798.57,584.52 L803.00,572.24 L807.43,567.82 L811.87,550.73 L816.30,563.98 L820.73,563.98 L825.17,548.62 L829.60,557.26 L834.03,575.50 L838.46,560.14 L842.90,570.12 L847.33,575.50 L851.76,565.32 L856.20,556.68 L860.63,569.16 L865.06,573.20 L869.50,558.22 L873.93,569.16 L878.36,575.12 L882.79,560.14 L887.23,545.36 L891.66,546.70 L896.09,554.00 L900.53,550.54 L904.96,546.70 L909.39,562.25 L913.83,560.14 L918.26,548.62 L922.69,548.62 L927.12,567.82 L931.56,552.46 L935.99,546.70 L940.42,564.17 L944.86,583.18 L949.29,579.72 L953.72,568.20 L958.16,560.14 L962.59,559.95 L967.02,554.38 L971.45,552.46 L975.89,562.25 L980.32,565.32 L984.75,564.17 L989.19,574.16 L993.62,590.09 L998.05,602.00 L1002.49,587.02 L1006.92,586.06 L1011.35,575.69 L1015.78,590.09 L1020.22,597.96 L1024.65,591.05 L1029.08,602.00 L1033.52,588.17 L1037.95,570.12 L1042.38,556.68 L1046.82,570.12 L1051.25,585.10 L1055.68,575.12 L1060.12,562.25 L1064.55,548.62 L1068.98,550.54 L1073.41,562.25 L1077.85,576.65 L1082.28,566.28 L1086.71,564.17 L1091.15,552.46 L1095.58,548.62 L1100.01,550.54 L1104.44,543.44 L1108.88,558.22 L1113.31,563.98 L1117.74,550.73 L1122.18,562.25 L1126.61,568.20 L1131.04,574.16 L1135.48,586.06 L1139.91,596.04 L1144.34,602.00 L1148.78,592.01 L1153.21,596.04 L1157.64,580.11 L1162.07,596.04 L1166.51,591.05 L1170.94,596.62 L1175.37,598.54 L1179.81,600.08 L1184.24,610.06 L1188.67,622.92 L1193.11,619.85 L1197.54,600.08 L1201.97,616.97 L1206.40,606.22 L1210.84,585.10 L1215.27,592.01 L1219.70,575.69 L1224.14,590.09 L1228.57,572.24 L1233.00,583.18 L1237.43,597.58 L1241.87,588.17 L1246.30,584.14 L1250.73,577.23 L1255.17,580.49 L1259.60,566.28 L1264.03,570.70 L1268.47,562.25 L1272.90,569.16 L1277.33,563.98 L1281.76,558.22 L1286.20,563.98 L1290.63,552.46 L1295.06,543.44 L1299.50,548.04 L1303.93,545.36 L1308.36,557.84 L1312.80,541.32 L1317.23,546.32 L1321.66,556.30 L1326.09,551.31 L1330.53,569.16 L1334.96,578.19 L1339.39,575.12 L1343.83,590.09 L1348.26,605.07 L1352.69,604.30 L1357.13,613.90 L1361.56,628.30 L1365.99,623.50 L1370.42,608.33 L1374.86,611.98 L1379.29,614.86 L1383.72,631.76 L1388.16,617.93 L1392.59,607.95 L1397.02,596.43 L1401.46,589.13 L1405.89,585.10 L1410.32,600.08 L1414.75,602.00 L1419.19,587.02 L1423.62,571.85 L1428.05,572.24 L1434.70,580.11" fill="none" stroke="#27816f" stroke-width="1.2" stroke-linejoin="round"/><path d="M373.00,556.88 L377.43,558.22 L381.87,584.14 L386.30,577.42 L390.73,583.18 L395.17,606.22 L399.60,585.10 L404.03,592.78 L408.46,619.66 L412.90,633.10 L417.33,617.74 L421.76,631.76 L426.20,608.14 L430.63,586.06 L435.06,612.94 L439.50,617.74 L443.93,622.92 L448.36,599.12 L452.79,591.63 L457.23,602.96 L461.66,614.86 L466.09,590.86 L470.53,602.38 L474.96,613.90 L479.39,592.78 L483.82,574.16 L488.26,562.06 L492.69,540.94 L497.12,527.50 L501.56,508.30 L505.99,518.48 L510.42,491.21 L514.86,512.14 L519.29,512.52 L523.72,513.48 L528.15,514.06 L532.59,530.38 L537.02,550.54 L541.45,528.08 L545.89,558.22 L550.32,576.65 L554.75,577.42 L559.19,583.18 L563.62,608.33 L568.05,595.08 L572.49,568.20 L576.92,545.36 L581.35,571.66 L585.78,564.17 L590.22,548.62 L594.65,571.66 L599.08,575.50 L603.52,579.34 L607.95,569.16 L612.38,559.37 L616.82,546.70 L621.25,535.37 L625.68,546.70 L630.11,534.03 L634.55,548.62 L638.98,537.48 L643.41,566.28 L647.85,585.10 L652.28,560.14 L656.71,536.33 L661.14,518.48 L665.58,532.88 L670.01,528.84 L674.44,525.58 L678.88,523.66 L683.31,514.64 L687.74,516.94 L692.18,524.43 L696.61,535.37 L701.04,518.48 L705.47,545.36 L709.91,553.23 L714.34,576.27 L718.77,567.82 L723.21,562.25 L727.64,569.74 L732.07,599.12 L736.51,586.06 L740.94,577.42 L745.37,594.12 L749.81,616.97 L754.24,594.12 L758.67,580.49 L763.10,592.01 L767.54,602.00 L771.97,601.04 L776.40,606.22 L780.84,623.88 L785.27,613.52 L789.70,604.30 L794.13,632.91 L798.57,621.96 L803.00,621.58 L807.43,624.84 L811.87,597.96 L816.30,606.22 L820.73,591.05 L825.17,620.81 L829.60,606.22 L834.03,577.42 L838.46,602.00 L842.90,617.74 L847.33,602.00 L851.76,575.50 L856.20,604.30 L860.63,597.96 L865.06,568.20 L869.50,582.22 L873.93,601.04 L878.36,592.01 L882.79,572.24 L887.23,552.46 L891.66,576.27 L896.09,555.34 L900.53,569.16 L904.96,561.29 L909.39,535.37 L913.83,545.36 L918.26,556.30 L922.69,575.12 L927.12,584.14 L931.56,594.12 L935.99,606.22 L940.42,602.96 L944.86,623.50 L949.29,592.01 L953.72,595.08 L958.16,574.16 L962.59,592.01 L967.02,612.94 L971.45,595.08 L975.89,600.08 L980.32,624.84 L984.75,611.98 L989.19,594.12 L993.62,583.18 L998.05,606.99 L1002.49,590.09 L1006.92,572.24 L1011.35,546.70 L1015.78,573.20 L1020.22,550.54 L1024.65,541.32 L1029.08,551.31 L1033.52,559.37 L1037.95,538.44 L1042.38,520.59 L1046.82,504.65 L1051.25,516.56 L1055.68,544.40 L1060.12,535.37 L1064.55,518.48 L1068.98,502.54 L1073.41,495.63 L1077.85,522.51 L1082.28,529.42 L1086.71,530.38 L1091.15,560.14 L1095.58,559.37 L1100.01,544.40 L1104.44,524.04 L1108.88,532.49 L1113.31,544.40 L1117.74,564.17 L1122.18,549.39 L1126.61,520.59 L1131.04,502.54 L1135.48,518.48 L1139.91,538.44 L1144.34,555.34 L1148.78,569.16 L1153.21,568.20 L1157.64,578.19 L1162.07,560.14 L1166.51,573.20 L1170.94,575.12 L1175.37,575.69 L1179.81,590.09 L1184.24,616.01 L1188.67,628.88 L1193.11,602.38 L1197.54,618.89 L1201.97,606.22 L1206.40,608.91 L1210.84,608.14 L1215.27,588.56 L1219.70,599.12 L1224.14,590.09 L1228.57,582.22 L1233.00,587.02 L1237.43,606.22 L1241.87,628.88 L1246.30,597.96 L1250.73,582.22 L1255.17,557.26 L1259.60,552.46 L1264.03,540.36 L1268.47,512.52 L1272.90,534.41 L1277.33,558.22 L1281.76,552.46 L1286.20,522.51 L1290.63,547.28 L1295.06,535.37 L1299.50,543.44 L1303.93,562.25 L1308.36,574.16 L1312.80,586.06 L1317.23,581.26 L1321.66,585.10 L1326.09,578.19 L1330.53,570.12 L1334.96,542.48 L1339.39,529.42 L1343.83,524.04 L1348.26,541.32 L1352.69,546.32 L1357.13,518.48 L1361.56,544.40 L1365.99,571.85 L1370.42,575.12 L1374.86,560.14 L1379.29,561.29 L1383.72,531.34 L1388.16,554.38 L1392.59,535.37 L1397.02,546.32 L1401.46,573.20 L1405.89,568.20 L1410.32,556.30 L1414.75,541.32 L1419.19,554.38 L1423.62,569.16 L1428.05,589.13 L1434.70,597.00" fill="none" stroke="#cbe462" stroke-width="1.3" stroke-linejoin="round"/><line x1="372" y1="652.5" x2="1435" y2="652.5" stroke="#ccd6eb"/><line x1="380.5" y1="652" x2="380.5" y2="662" stroke="#ccd6eb"/><text x="380.75" y="671" text-anchor="middle" class="ax">9:55 am</text><line x1="469.5" y1="652" x2="469.5" y2="662" stroke="#ccd6eb"/><text x="469.75" y="671" text-anchor="middle" class="ax">10:00 am</text><line x1="558.5" y1="652" x2="558.5" y2="662" stroke="#ccd6eb"/><text x="558.75" y="671" text-anchor="middle" class="ax">10:05 am</text><line x1="646.5" y1="652" x2="646.5" y2="662" stroke="#ccd6eb"/><text x="646.75" y="671" text-anchor="middle" class="ax">10:10 am</text><line x1="735.5" y1="652" x2="735.5" y2="662" stroke="#ccd6eb"/><text x="735.75" y="671" text-anchor="middle" class="ax">10:15 am</text><line x1="824.5" y1="652" x2="824.5" y2="662" stroke="#ccd6eb"/><text x="824.75" y="671" text-anchor="middle" class="ax">10:20 am</text><line x1="912.5" y1="652" x2="912.5" y2="662" stroke="#ccd6eb"/><text x="912.75" y="671" text-anchor="middle" class="ax">10:25 am</text><line x1="1001.5" y1="652" x2="1001.5" y2="662" stroke="#ccd6eb"/><text x="1001.75" y="671" text-anchor="middle" class="ax">10:30 am</text><line x1="1090.5" y1="652" x2="1090.5" y2="662" stroke="#ccd6eb"/><text x="1090.75" y="671" text-anchor="middle" class="ax">10:35 am</text><line x1="1178.5" y1="652" x2="1178.5" y2="662" stroke="#ccd6eb"/><text x="1178.75" y="671" text-anchor="middle" class="ax">10:40 am</text><line x1="1267.5" y1="652" x2="1267.5" y2="662" stroke="#ccd6eb"/><text x="1267.75" y="671" text-anchor="middle" class="ax">10:45 am</text><line x1="1356.5" y1="652" x2="1356.5" y2="662" stroke="#ccd6eb"/><text x="1356.75" y="671" text-anchor="middle" class="ax">10:50 am</text><text x="359" y="463" text-anchor="end" class="ax">100%</text><text x="359" y="560" text-anchor="end" class="ax">50%</text><text x="359" y="655" text-anchor="end" class="ax">0%</text><text x="877" y="432" text-anchor="middle" class="title">CPU &amp; RAM</text><rect x="443.5" y="518.5" width="62" height="50" fill="#fff" stroke="#909090"/><circle cx="459" cy="531" r="6" fill="#13978b"/><text x="472" y="536" class="leg">CPU</text><circle cx="459" cy="551" r="6" fill="#c9d93a"/><text x="472" y="556" class="leg">RAM</text><line x1="372" y1="760.5" x2="1435" y2="760.5" stroke="#e6e6e6"/><line x1="372" y1="825.5" x2="1435" y2="825.5" stroke="#e6e6e6"/><line x1="372" y1="888.5" x2="1435" y2="888.5" stroke="#e6e6e6"/><line x1="372" y1="952.5" x2="1435" y2="952.5" stroke="#e6e6e6"/><line x1="380.5" y1="760" x2="380.5" y2="952" stroke="#e6e6e6"/><line x1="469.5" y1="760" x2="469.5" y2="952" stroke="#e6e6e6"/><line x1="558.5" y1="760" x2="558.5" y2="952" stroke="#e6e6e6"/><line x1="646.5" y1="760" x2="646.5" y2="952" stroke="#e6e6e6"/><line x1="735.5" y1="760" x2="735.5" y2="952" stroke="#e6e6e6"/><line x1="824.5" y1="760" x2="824.5" y2="952" stroke="#e6e6e6"/><line x1="912.5" y1="760" x2="912.5" y2="952" stroke="#e6e6e6"/><line x1="1001.5" y1="760" x2="1001.5" y2="952" stroke="#e6e6e6"/><line x1="1090.5" y1="760" x2="1090.5" y2="952" stroke="#e6e6e6"/><line x1="1178.5" y1="760" x2="1178.5" y2="952" stroke="#e6e6e6"/><line x1="1267.5" y1="760" x2="1267.5" y2="952" stroke="#e6e6e6"/><line x1="1356.5" y1="760" x2="1356.5" y2="952" stroke="#e6e6e6"/><path d="M373.00,858.32 L377.43,838.48 L381.87,854.48 L386.30,840.40 L390.73,850.32 L395.17,866.32 L399.60,879.12 L404.03,858.32 L408.46,843.60 L412.90,852.56 L417.33,829.52 L421.76,830.48 L426.20,842.64 L430.63,864.40 L435.06,886.16 L439.50,895.12 L443.93,887.12 L448.36,901.84 L452.79,882.32 L457.23,869.20 L461.66,872.40 L466.09,882.32 L470.53,887.12 L474.96,883.28 L479.39,894.16 L483.82,917.20 L488.26,903.12 L492.69,896.08 L497.12,899.28 L501.56,892.24 L505.99,884.24 L510.42,877.20 L514.86,892.24 L519.29,906.96 L523.72,892.56 L528.15,903.76 L532.59,897.68 L537.02,901.84 L541.45,887.76 L545.89,899.28 L550.32,878.16 L554.75,897.04 L559.19,893.20 L563.62,881.36 L568.05,888.72 L572.49,909.20 L576.92,904.08 L581.35,906.96 L585.78,885.84 L590.22,892.24 L594.65,903.12 L599.08,884.56 L603.52,886.16 L607.95,889.04 L612.38,882.00 L616.82,897.68 L621.25,907.92 L625.68,924.88 L630.11,914.00 L634.55,919.12 L638.98,934.80 L643.41,940.88 L647.85,923.92 L652.28,903.12 L656.71,887.12 L661.14,881.36 L665.58,875.28 L670.01,880.40 L674.44,858.32 L678.88,838.48 L683.31,851.28 L687.74,868.24 L692.18,891.28 L696.61,899.28 L701.04,915.92 L705.47,896.40 L709.91,905.04 L714.34,909.20 L718.77,911.76 L723.21,906.00 L727.64,890.32 L732.07,909.20 L736.51,904.40 L740.94,924.88 L745.37,922.96 L749.81,931.92 L754.24,913.04 L758.67,933.84 L763.10,914.00 L767.54,896.08 L771.97,877.20 L776.40,859.92 L780.84,876.24 L785.27,894.16 L789.70,877.20 L794.13,874.00 L798.57,882.32 L803.00,879.12 L807.43,887.12 L811.87,909.20 L816.30,902.16 L820.73,886.16 L825.17,901.20 L829.60,914.00 L834.03,894.16 L838.46,874.64 L842.90,894.16 L847.33,914.00 L851.76,915.92 L856.20,898.00 L860.63,891.28 L865.06,884.24 L869.50,874.32 L873.93,882.32 L878.36,877.84 L882.79,863.44 L887.23,863.44 L891.66,879.12 L896.09,876.56 L900.53,888.40 L904.96,899.28 L909.39,912.08 L913.83,905.04 L918.26,911.12 L922.69,934.16 L927.12,929.04 L931.56,925.84 L935.99,906.96 L940.42,906.96 L944.86,916.88 L949.29,920.40 L953.72,919.12 L958.16,903.76 L962.59,907.60 L967.02,919.12 L971.45,907.60 L975.89,924.24 L980.32,922.96 L984.75,920.08 L989.19,923.60 L993.62,912.08 L998.05,895.76 L1002.49,890.32 L1006.92,899.28 L1011.35,879.12 L1015.78,898.00 L1020.22,914.96 L1024.65,936.40 L1029.08,925.84 L1033.52,930.00 L1037.95,927.44 L1042.38,912.40 L1046.82,924.24 L1051.25,940.24 L1055.68,933.84 L1060.12,938.32 L1064.55,933.52 L1068.98,917.52 L1073.41,925.52 L1077.85,904.08 L1082.28,906.64 L1086.71,895.12 L1091.15,886.16 L1095.58,867.28 L1100.01,841.36 L1104.44,856.72 L1108.88,855.44 L1113.31,861.52 L1117.74,870.16 L1122.18,864.08 L1126.61,848.40 L1131.04,837.52 L1135.48,844.56 L1139.91,861.52 L1144.34,841.36 L1148.78,842.64 L1153.21,824.72 L1157.64,841.36 L1162.07,844.56 L1166.51,832.40 L1170.94,826.32 L1175.37,838.48 L1179.81,852.56 L1184.24,866.00 L1188.67,848.40 L1193.11,854.48 L1197.54,862.48 L1201.97,856.72 L1206.40,875.28 L1210.84,880.40 L1215.27,880.72 L1219.70,904.08 L1224.14,921.04 L1228.57,930.32 L1233.00,930.00 L1237.43,932.24 L1241.87,930.00 L1246.30,919.12 L1250.73,923.92 L1255.17,928.08 L1259.60,941.52 L1264.03,939.92 L1268.47,937.04 L1272.90,932.88 L1277.33,918.48 L1281.76,934.80 L1286.20,929.68 L1290.63,930.00 L1295.06,928.08 L1299.50,911.12 L1303.93,918.16 L1308.36,930.00 L1312.80,927.44 L1317.23,930.96 L1321.66,914.96 L1326.09,906.96 L1330.53,885.20 L1334.96,887.12 L1339.39,906.00 L1343.83,926.48 L1348.26,929.04 L1352.69,940.24 L1357.13,932.88 L1361.56,921.04 L1365.99,902.16 L1370.42,882.32 L1374.86,875.28 L1379.29,855.44 L1383.72,855.44 L1388.16,836.88 L1392.59,841.04 L1397.02,863.44 L1401.46,865.36 L1405.89,842.64 L1410.32,858.32 L1414.75,867.28 L1419.19,882.00 L1423.62,863.44 L1428.05,864.40 L1434.70,885.20 L1434.70,952.40 L373.00,952.40 Z" fill="#1c9898" fill-opacity="0.22"/><path d="M373.00,926.80 L377.43,922.96 L381.87,922.96 L386.30,925.84 L390.73,923.92 L395.17,922.96 L399.60,925.84 L404.03,924.88 L408.46,924.24 L412.90,926.80 L417.33,924.88 L421.76,929.04 L426.20,932.88 L430.63,930.96 L435.06,929.68 L439.50,932.88 L443.93,935.76 L448.36,938.00 L452.79,938.32 L457.23,940.24 L461.66,943.76 L466.09,946.96 L470.53,948.24 L474.96,947.28 L479.39,947.92 L483.82,946.00 L488.26,944.72 L492.69,944.72 L497.12,942.80 L501.56,940.88 L505.99,942.80 L510.42,942.80 L514.86,946.96 L519.29,946.00 L523.72,946.96 L528.15,943.76 L532.59,942.80 L537.02,941.84 L541.45,938.96 L545.89,934.80 L550.32,931.92 L554.75,930.00 L559.19,929.04 L563.62,932.24 L568.05,930.00 L572.49,926.80 L576.92,922.96 L581.35,922.32 L585.78,923.60 L590.22,927.44 L594.65,928.08 L599.08,925.84 L603.52,930.00 L607.95,931.60 L612.38,928.08 L616.82,925.52 L621.25,925.52 L625.68,926.48 L630.11,924.88 L634.55,926.80 L638.98,926.80 L643.41,929.04 L647.85,928.40 L652.28,923.92 L656.71,922.96 L661.14,924.88 L665.58,926.48 L670.01,928.08 L674.44,930.96 L678.88,929.68 L683.31,928.40 L687.74,929.04 L692.18,925.52 L696.61,928.40 L701.04,923.92 L705.47,926.80 L709.91,930.32 L714.34,926.48 L718.77,930.32 L723.21,928.40 L727.64,926.80 L732.07,930.00 L736.51,929.04 L740.94,929.68 L745.37,930.96 L749.81,932.24 L754.24,930.96 L758.67,930.00 L763.10,931.92 L767.54,933.52 L771.97,932.24 L776.40,935.76 L780.84,939.60 L785.27,943.76 L789.70,942.16 L794.13,944.40 L798.57,946.96 L803.00,943.44 L807.43,947.92 L811.87,949.52 L816.30,947.28 L820.73,943.44 L825.17,940.88 L829.60,938.96 L834.03,941.52 L838.46,938.00 L842.90,935.44 L847.33,934.80 L851.76,936.40 L856.20,932.88 L860.63,934.80 L865.06,938.96 L869.50,934.80 L873.93,937.04 L878.36,936.40 L882.79,937.04 L887.23,934.80 L891.66,938.96 L896.09,942.80 L900.53,939.92 L904.96,938.96 L909.39,940.88 L913.83,942.80 L918.26,946.32 L922.69,942.80 L927.12,938.96 L931.56,934.80 L935.99,936.40 L940.42,937.04 L944.86,939.92 L949.29,942.80 L953.72,944.40 L958.16,938.00 L962.59,937.36 L967.02,935.44 L971.45,932.88 L975.89,933.52 L980.32,933.84 L984.75,937.04 L989.19,937.04 L993.62,937.36 L998.05,938.96 L1002.49,936.40 L1006.92,936.40 L1011.35,938.32 L1015.78,937.36 L1020.22,939.60 L1024.65,941.84 L1029.08,942.80 L1033.52,940.88 L1037.95,941.84 L1042.38,942.16 L1046.82,938.96 L1051.25,936.40 L1055.68,938.96 L1060.12,937.04 L1064.55,932.88 L1068.98,928.08 L1073.41,925.52 L1077.85,926.48 L1082.28,926.80 L1086.71,924.24 L1091.15,922.96 L1095.58,924.24 L1100.01,925.84 L1104.44,926.80 L1108.88,924.24 L1113.31,926.48 L1117.74,922.96 L1122.18,929.04 L1126.61,930.96 L1131.04,932.24 L1135.48,935.44 L1139.91,934.16 L1144.34,930.96 L1148.78,928.40 L1153.21,933.52 L1157.64,936.40 L1162.07,937.04 L1166.51,937.04 L1170.94,938.00 L1175.37,931.92 L1179.81,930.32 L1184.24,930.96 L1188.67,930.32 L1193.11,931.92 L1197.54,930.96 L1201.97,932.88 L1206.40,930.00 L1210.84,929.68 L1215.27,926.80 L1219.70,925.52 L1224.14,929.04 L1228.57,931.92 L1233.00,932.88 L1237.43,935.44 L1241.87,933.52 L1246.30,931.92 L1250.73,930.00 L1255.17,931.92 L1259.60,934.80 L1264.03,937.04 L1268.47,939.92 L1272.90,940.88 L1277.33,939.92 L1281.76,938.96 L1286.20,938.96 L1290.63,933.84 L1295.06,930.32 L1299.50,932.88 L1303.93,930.32 L1308.36,933.84 L1312.80,935.76 L1317.23,934.80 L1321.66,933.52 L1326.09,936.40 L1330.53,935.76 L1334.96,934.80 L1339.39,940.24 L1343.83,942.16 L1348.26,940.88 L1352.69,938.00 L1357.13,936.40 L1361.56,934.80 L1365.99,934.80 L1370.42,937.36 L1374.86,939.60 L1379.29,937.04 L1383.72,938.32 L1388.16,938.96 L1392.59,934.80 L1397.02,932.24 L1401.46,931.92 L1405.89,930.32 L1410.32,928.40 L1414.75,930.32 L1419.19,934.80 L1423.62,931.60 L1428.05,930.96 L1434.70,929.04 L1434.70,952.40 L373.00,952.40 Z" fill="#c8d637" fill-opacity="0.22"/><path d="M373.00,858.32 L377.43,838.48 L381.87,854.48 L386.30,840.40 L390.73,850.32 L395.17,866.32 L399.60,879.12 L404.03,858.32 L408.46,843.60 L412.90,852.56 L417.33,829.52 L421.76,830.48 L426.20,842.64 L430.63,864.40 L435.06,886.16 L439.50,895.12 L443.93,887.12 L448.36,901.84 L452.79,882.32 L457.23,869.20 L461.66,872.40 L466.09,882.32 L470.53,887.12 L474.96,883.28 L479.39,894.16 L483.82,917.20 L488.26,903.12 L492.69,896.08 L497.12,899.28 L501.56,892.24 L505.99,884.24 L510.42,877.20 L514.86,892.24 L519.29,906.96 L523.72,892.56 L528.15,903.76 L532.59,897.68 L537.02,901.84 L541.45,887.76 L545.89,899.28 L550.32,878.16 L554.75,897.04 L559.19,893.20 L563.62,881.36 L568.05,888.72 L572.49,909.20 L576.92,904.08 L581.35,906.96 L585.78,885.84 L590.22,892.24 L594.65,903.12 L599.08,884.56 L603.52,886.16 L607.95,889.04 L612.38,882.00 L616.82,897.68 L621.25,907.92 L625.68,924.88 L630.11,914.00 L634.55,919.12 L638.98,934.80 L643.41,940.88 L647.85,923.92 L652.28,903.12 L656.71,887.12 L661.14,881.36 L665.58,875.28 L670.01,880.40 L674.44,858.32 L678.88,838.48 L683.31,851.28 L687.74,868.24 L692.18,891.28 L696.61,899.28 L701.04,915.92 L705.47,896.40 L709.91,905.04 L714.34,909.20 L718.77,911.76 L723.21,906.00 L727.64,890.32 L732.07,909.20 L736.51,904.40 L740.94,924.88 L745.37,922.96 L749.81,931.92 L754.24,913.04 L758.67,933.84 L763.10,914.00 L767.54,896.08 L771.97,877.20 L776.40,859.92 L780.84,876.24 L785.27,894.16 L789.70,877.20 L794.13,874.00 L798.57,882.32 L803.00,879.12 L807.43,887.12 L811.87,909.20 L816.30,902.16 L820.73,886.16 L825.17,901.20 L829.60,914.00 L834.03,894.16 L838.46,874.64 L842.90,894.16 L847.33,914.00 L851.76,915.92 L856.20,898.00 L860.63,891.28 L865.06,884.24 L869.50,874.32 L873.93,882.32 L878.36,877.84 L882.79,863.44 L887.23,863.44 L891.66,879.12 L896.09,876.56 L900.53,888.40 L904.96,899.28 L909.39,912.08 L913.83,905.04 L918.26,911.12 L922.69,934.16 L927.12,929.04 L931.56,925.84 L935.99,906.96 L940.42,906.96 L944.86,916.88 L949.29,920.40 L953.72,919.12 L958.16,903.76 L962.59,907.60 L967.02,919.12 L971.45,907.60 L975.89,924.24 L980.32,922.96 L984.75,920.08 L989.19,923.60 L993.62,912.08 L998.05,895.76 L1002.49,890.32 L1006.92,899.28 L1011.35,879.12 L1015.78,898.00 L1020.22,914.96 L1024.65,936.40 L1029.08,925.84 L1033.52,930.00 L1037.95,927.44 L1042.38,912.40 L1046.82,924.24 L1051.25,940.24 L1055.68,933.84 L1060.12,938.32 L1064.55,933.52 L1068.98,917.52 L1073.41,925.52 L1077.85,904.08 L1082.28,906.64 L1086.71,895.12 L1091.15,886.16 L1095.58,867.28 L1100.01,841.36 L1104.44,856.72 L1108.88,855.44 L1113.31,861.52 L1117.74,870.16 L1122.18,864.08 L1126.61,848.40 L1131.04,837.52 L1135.48,844.56 L1139.91,861.52 L1144.34,841.36 L1148.78,842.64 L1153.21,824.72 L1157.64,841.36 L1162.07,844.56 L1166.51,832.40 L1170.94,826.32 L1175.37,838.48 L1179.81,852.56 L1184.24,866.00 L1188.67,848.40 L1193.11,854.48 L1197.54,862.48 L1201.97,856.72 L1206.40,875.28 L1210.84,880.40 L1215.27,880.72 L1219.70,904.08 L1224.14,921.04 L1228.57,930.32 L1233.00,930.00 L1237.43,932.24 L1241.87,930.00 L1246.30,919.12 L1250.73,923.92 L1255.17,928.08 L1259.60,941.52 L1264.03,939.92 L1268.47,937.04 L1272.90,932.88 L1277.33,918.48 L1281.76,934.80 L1286.20,929.68 L1290.63,930.00 L1295.06,928.08 L1299.50,911.12 L1303.93,918.16 L1308.36,930.00 L1312.80,927.44 L1317.23,930.96 L1321.66,914.96 L1326.09,906.96 L1330.53,885.20 L1334.96,887.12 L1339.39,906.00 L1343.83,926.48 L1348.26,929.04 L1352.69,940.24 L1357.13,932.88 L1361.56,921.04 L1365.99,902.16 L1370.42,882.32 L1374.86,875.28 L1379.29,855.44 L1383.72,855.44 L1388.16,836.88 L1392.59,841.04 L1397.02,863.44 L1401.46,865.36 L1405.89,842.64 L1410.32,858.32 L1414.75,867.28 L1419.19,882.00 L1423.62,863.44 L1428.05,864.40 L1434.70,885.20" fill="none" stroke="#27816f" stroke-width="1.2" stroke-linejoin="round"/><path d="M373.00,926.80 L377.43,922.96 L381.87,922.96 L386.30,925.84 L390.73,923.92 L395.17,922.96 L399.60,925.84 L404.03,924.88 L408.46,924.24 L412.90,926.80 L417.33,924.88 L421.76,929.04 L426.20,932.88 L430.63,930.96 L435.06,929.68 L439.50,932.88 L443.93,935.76 L448.36,938.00 L452.79,938.32 L457.23,940.24 L461.66,943.76 L466.09,946.96 L470.53,948.24 L474.96,947.28 L479.39,947.92 L483.82,946.00 L488.26,944.72 L492.69,944.72 L497.12,942.80 L501.56,940.88 L505.99,942.80 L510.42,942.80 L514.86,946.96 L519.29,946.00 L523.72,946.96 L528.15,943.76 L532.59,942.80 L537.02,941.84 L541.45,938.96 L545.89,934.80 L550.32,931.92 L554.75,930.00 L559.19,929.04 L563.62,932.24 L568.05,930.00 L572.49,926.80 L576.92,922.96 L581.35,922.32 L585.78,923.60 L590.22,927.44 L594.65,928.08 L599.08,925.84 L603.52,930.00 L607.95,931.60 L612.38,928.08 L616.82,925.52 L621.25,925.52 L625.68,926.48 L630.11,924.88 L634.55,926.80 L638.98,926.80 L643.41,929.04 L647.85,928.40 L652.28,923.92 L656.71,922.96 L661.14,924.88 L665.58,926.48 L670.01,928.08 L674.44,930.96 L678.88,929.68 L683.31,928.40 L687.74,929.04 L692.18,925.52 L696.61,928.40 L701.04,923.92 L705.47,926.80 L709.91,930.32 L714.34,926.48 L718.77,930.32 L723.21,928.40 L727.64,926.80 L732.07,930.00 L736.51,929.04 L740.94,929.68 L745.37,930.96 L749.81,932.24 L754.24,930.96 L758.67,930.00 L763.10,931.92 L767.54,933.52 L771.97,932.24 L776.40,935.76 L780.84,939.60 L785.27,943.76 L789.70,942.16 L794.13,944.40 L798.57,946.96 L803.00,943.44 L807.43,947.92 L811.87,949.52 L816.30,947.28 L820.73,943.44 L825.17,940.88 L829.60,938.96 L834.03,941.52 L838.46,938.00 L842.90,935.44 L847.33,934.80 L851.76,936.40 L856.20,932.88 L860.63,934.80 L865.06,938.96 L869.50,934.80 L873.93,937.04 L878.36,936.40 L882.79,937.04 L887.23,934.80 L891.66,938.96 L896.09,942.80 L900.53,939.92 L904.96,938.96 L909.39,940.88 L913.83,942.80 L918.26,946.32 L922.69,942.80 L927.12,938.96 L931.56,934.80 L935.99,936.40 L940.42,937.04 L944.86,939.92 L949.29,942.80 L953.72,944.40 L958.16,938.00 L962.59,937.36 L967.02,935.44 L971.45,932.88 L975.89,933.52 L980.32,933.84 L984.75,937.04 L989.19,937.04 L993.62,937.36 L998.05,938.96 L1002.49,936.40 L1006.92,936.40 L1011.35,938.32 L1015.78,937.36 L1020.22,939.60 L1024.65,941.84 L1029.08,942.80 L1033.52,940.88 L1037.95,941.84 L1042.38,942.16 L1046.82,938.96 L1051.25,936.40 L1055.68,938.96 L1060.12,937.04 L1064.55,932.88 L1068.98,928.08 L1073.41,925.52 L1077.85,926.48 L1082.28,926.80 L1086.71,924.24 L1091.15,922.96 L1095.58,924.24 L1100.01,925.84 L1104.44,926.80 L1108.88,924.24 L1113.31,926.48 L1117.74,922.96 L1122.18,929.04 L1126.61,930.96 L1131.04,932.24 L1135.48,935.44 L1139.91,934.16 L1144.34,930.96 L1148.78,928.40 L1153.21,933.52 L1157.64,936.40 L1162.07,937.04 L1166.51,937.04 L1170.94,938.00 L1175.37,931.92 L1179.81,930.32 L1184.24,930.96 L1188.67,930.32 L1193.11,931.92 L1197.54,930.96 L1201.97,932.88 L1206.40,930.00 L1210.84,929.68 L1215.27,926.80 L1219.70,925.52 L1224.14,929.04 L1228.57,931.92 L1233.00,932.88 L1237.43,935.44 L1241.87,933.52 L1246.30,931.92 L1250.73,930.00 L1255.17,931.92 L1259.60,934.80 L1264.03,937.04 L1268.47,939.92 L1272.90,940.88 L1277.33,939.92 L1281.76,938.96 L1286.20,938.96 L1290.63,933.84 L1295.06,930.32 L1299.50,932.88 L1303.93,930.32 L1308.36,933.84 L1312.80,935.76 L1317.23,934.80 L1321.66,933.52 L1326.09,936.40 L1330.53,935.76 L1334.96,934.80 L1339.39,940.24 L1343.83,942.16 L1348.26,940.88 L1352.69,938.00 L1357.13,936.40 L1361.56,934.80 L1365.99,934.80 L1370.42,937.36 L1374.86,939.60 L1379.29,937.04 L1383.72,938.32 L1388.16,938.96 L1392.59,934.80 L1397.02,932.24 L1401.46,931.92 L1405.89,930.32 L1410.32,928.40 L1414.75,930.32 L1419.19,934.80 L1423.62,931.60 L1428.05,930.96 L1434.70,929.04" fill="none" stroke="#cbe462" stroke-width="1.3" stroke-linejoin="round"/><line x1="372" y1="952.5" x2="1435" y2="952.5" stroke="#ccd6eb"/><line x1="380.5" y1="952" x2="380.5" y2="962" stroke="#ccd6eb"/><text x="380.75" y="971" text-anchor="middle" class="ax">9:55 am</text><line x1="469.5" y1="952" x2="469.5" y2="962" stroke="#ccd6eb"/><text x="469.75" y="971" text-anchor="middle" class="ax">10:00 am</text><line x1="558.5" y1="952" x2="558.5" y2="962" stroke="#ccd6eb"/><text x="558.75" y="971" text-anchor="middle" class="ax">10:05 am</text><line x1="646.5" y1="952" x2="646.5" y2="962" stroke="#ccd6eb"/><text x="646.75" y="971" text-anchor="middle" class="ax">10:10 am</text><line x1="735.5" y1="952" x2="735.5" y2="962" stroke="#ccd6eb"/><text x="735.75" y="971" text-anchor="middle" class="ax">10:15 am</text><line x1="824.5" y1="952" x2="824.5" y2="962" stroke="#ccd6eb"/><text x="824.75" y="971" text-anchor="middle" class="ax">10:20 am</text><line x1="912.5" y1="952" x2="912.5" y2="962" stroke="#ccd6eb"/><text x="912.75" y="971" text-anchor="middle" class="ax">10:25 am</text><line x1="1001.5" y1="952" x2="1001.5" y2="962" stroke="#ccd6eb"/><text x="1001.75" y="971" text-anchor="middle" class="ax">10:30 am</text><line x1="1090.5" y1="952" x2="1090.5" y2="962" stroke="#ccd6eb"/><text x="1090.75" y="971" text-anchor="middle" class="ax">10:35 am</text><line x1="1178.5" y1="952" x2="1178.5" y2="962" stroke="#ccd6eb"/><text x="1178.75" y="971" text-anchor="middle" class="ax">10:40 am</text><line x1="1267.5" y1="952" x2="1267.5" y2="962" stroke="#ccd6eb"/><text x="1267.75" y="971" text-anchor="middle" class="ax">10:45 am</text><line x1="1356.5" y1="952" x2="1356.5" y2="962" stroke="#ccd6eb"/><text x="1356.75" y="971" text-anchor="middle" class="ax">10:50 am</text><text x="358" y="763" text-anchor="end" class="ax">60 Mbps</text><text x="358" y="828" text-anchor="end" class="ax">40 Mbps</text><text x="358" y="891" text-anchor="end" class="ax">20 Mbps</text><text x="358" y="955" text-anchor="end" class="ax">0 bps</text><text x="877" y="732" text-anchor="middle" class="title">eth0</text><rect x="443.5" y="818.5" width="51" height="50" fill="#fff" stroke="#909090"/><circle cx="459" cy="831" r="6" fill="#13978b"/><text x="472" y="836" class="leg">RX</text><circle cx="459" cy="851" r="6" fill="#c9d93a"/><text x="472" y="856" class="leg">TX</text></svg>
</body>
</html>
